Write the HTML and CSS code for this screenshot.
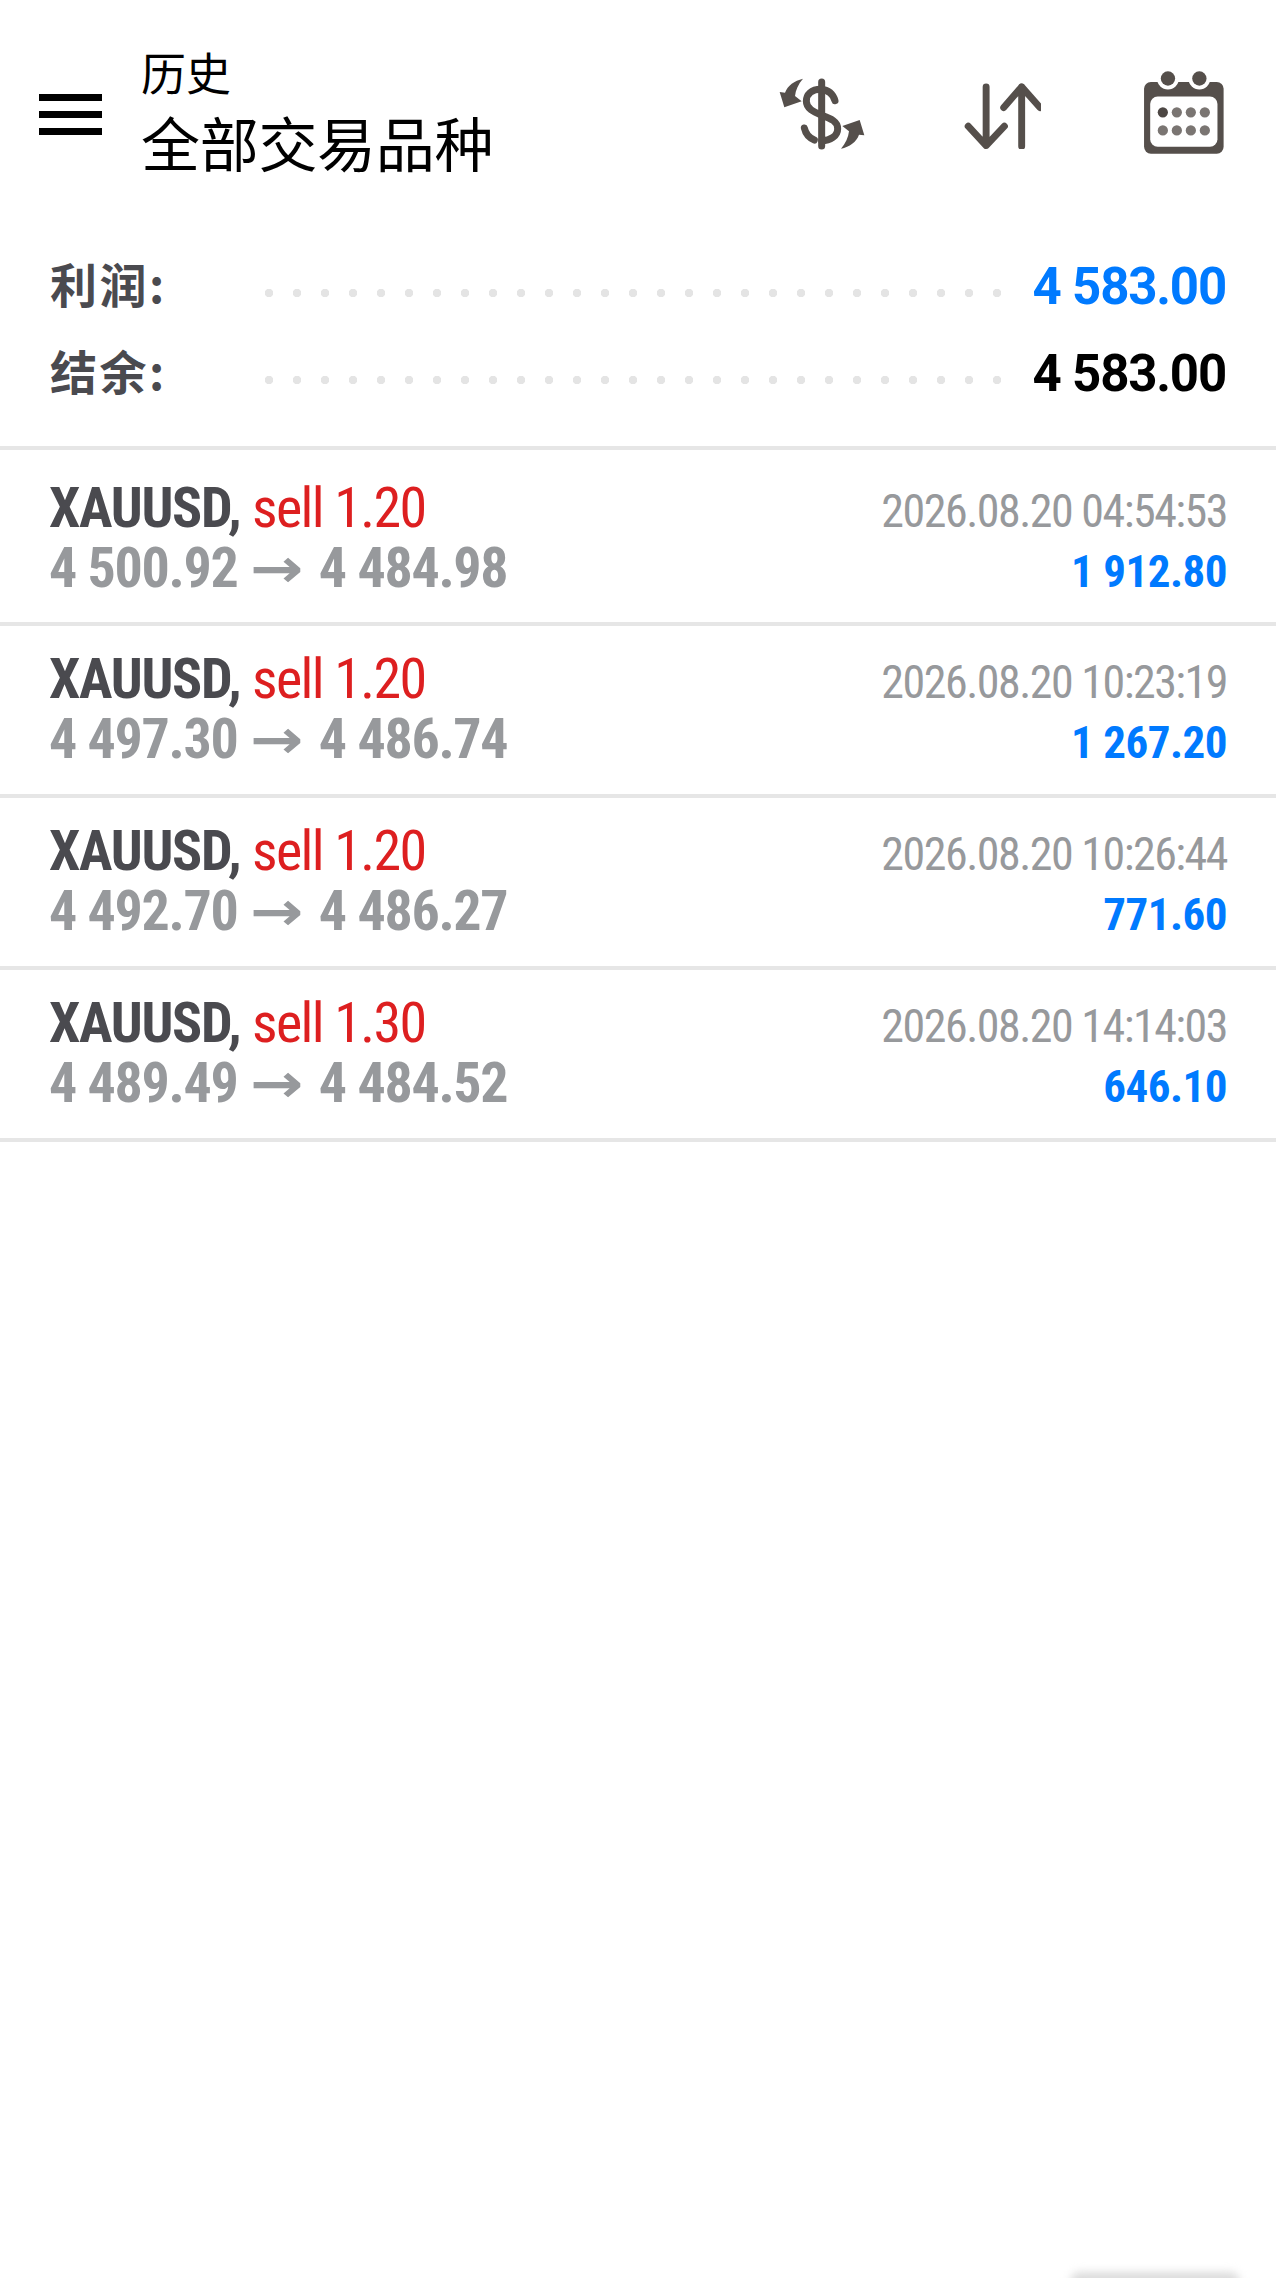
FILE: index.html
```html
<!DOCTYPE html>
<html lang="zh">
<head>
<meta charset="utf-8"/>
<title>历史</title>
<link rel="stylesheet" href="styles.css">
</head>
<body>
<div class="page">
  <header class="topbar">
    <div class="menu-btn"><span></span><span></span><span></span></div>
    <div class="titles">
      <div class="title-small">历史</div>
      <div class="title-big">全部交易品种</div>
    </div>
    <div class="actions">
      <svg class="icon-dollar" viewBox="0 0 300 252">
        <g fill="none" stroke="#554f4b" stroke-width="21" stroke-linecap="round">
          <path d="M152 30V222"/>
          <path d="M192 86C186 66 170 54 150 52C120 52 106 68 106 88C106 110 128 120 152 130C180 140 200 148 200 170C200 192 178 206 152 206"/>
          <path d="M100 168C104 186 116 198 130 204"/>
        </g>
        <g fill="#554f4b">
          <path d="M96 20C70 26 50 40 42 62L26 60L40 106L92 88L72 72C74 54 82 36 96 20Z"/>
          <path d="M96 20C70 26 50 40 42 62L26 60L40 106L92 88L72 72C74 54 82 36 96 20Z" transform="rotate(180 153 125)"/>
        </g>
      </svg>
      <svg class="icon-arrows" viewBox="0 0 226 194" fill="none" stroke="#554f4b" stroke-width="20" stroke-linecap="round" stroke-linejoin="round">
        <path d="M67 14V184M15 128L67 184L120 128"/>
        <path d="M170 186V14M118 74L170 14L223 74"/>
      </svg>
      <svg class="icon-calendar" viewBox="0 0 240 246">
        <rect x="3" y="32" width="233" height="210" rx="20" fill="#554f4b"/>
        <circle cx="73" cy="22" r="32" fill="#fff"/>
        <circle cx="165" cy="22" r="32" fill="#fff"/>
        <circle cx="73" cy="22" r="21" fill="#554f4b"/>
        <circle cx="165" cy="22" r="21" fill="#554f4b"/>
        <rect x="21" y="75" width="197" height="147" rx="22" fill="#fff"/>
        <g fill="#7a7572">
          <circle cx="58" cy="121" r="15" fill="#4d4744"/>
          <circle cx="99" cy="121" r="15"/>
          <circle cx="140" cy="121" r="15"/>
          <circle cx="181" cy="121" r="15"/>
          <circle cx="58" cy="174" r="15"/>
          <circle cx="99" cy="174" r="15"/>
          <circle cx="140" cy="174" r="15"/>
          <circle cx="181" cy="174" r="15"/>
        </g>
      </svg>
    </div>
  </header>

  <section class="summary">
    <div class="sum-row">
      <span class="sum-label">利润:</span>
      <span class="sum-dots"></span>
      <span class="sum-value blue">4 583.00</span>
    </div>
    <div class="sum-row">
      <span class="sum-label">结余:</span>
      <span class="sum-dots"></span>
      <span class="sum-value">4 583.00</span>
    </div>
  </section>

  <section class="deals">
    <div class="deal">
      <div class="deal-left">
        <div class="deal-name">XAUUSD, <span class="red">sell 1.20</span></div>
        <div class="deal-price">4 500.92 <span class="arrow">→</span> 4 484.98</div>
      </div>
      <div class="deal-right">
        <div class="deal-time">2026.08.20 04:54:53</div>
        <div class="deal-profit">1 912.80</div>
      </div>
    </div>
    <div class="deal">
      <div class="deal-left">
        <div class="deal-name">XAUUSD, <span class="red">sell 1.20</span></div>
        <div class="deal-price">4 497.30 <span class="arrow">→</span> 4 486.74</div>
      </div>
      <div class="deal-right">
        <div class="deal-time">2026.08.20 10:23:19</div>
        <div class="deal-profit">1 267.20</div>
      </div>
    </div>
    <div class="deal">
      <div class="deal-left">
        <div class="deal-name">XAUUSD, <span class="red">sell 1.20</span></div>
        <div class="deal-price">4 492.70 <span class="arrow">→</span> 4 486.27</div>
      </div>
      <div class="deal-right">
        <div class="deal-time">2026.08.20 10:26:44</div>
        <div class="deal-profit">771.60</div>
      </div>
    </div>
    <div class="deal">
      <div class="deal-left">
        <div class="deal-name">XAUUSD, <span class="red">sell 1.30</span></div>
        <div class="deal-price">4 489.49 <span class="arrow">→</span> 4 484.52</div>
      </div>
      <div class="deal-right">
        <div class="deal-time">2026.08.20 14:14:03</div>
        <div class="deal-profit">646.10</div>
      </div>
    </div>
  </section>

  <div class="gesture"></div>
</div>
</body>
</html>
```

FILE: styles.css
```css
html, body {
  margin: 0;
  padding: 0;
  background: #fff;
}

body {
  font-family: "Roboto", "Noto Sans CJK SC", sans-serif;
}

.page {
  position: relative;
  width: 1276px;
  height: 2278px;
  overflow: hidden;
}

/* top bar */
.topbar {
  display: flex;
  align-items: flex-start;
  height: 220px;
  box-sizing: border-box;
  padding: 43px 51px 0 39px;
}

.menu-btn {
  display: flex;
  flex-direction: column;
  gap: 10px;
  width: 63px;
  margin-top: 51px;
}

.menu-btn span {
  display: block;
  height: 7px;
  background: #000;
}

.titles {
  margin-left: 39px;
  font-family: "Noto Sans CJK SC", sans-serif;
  color: #000;
}

.title-small {
  font-size: 45px;
  line-height: 58px;
}

.title-big {
  font-size: 59px;
  line-height: 70px;
  margin-top: 6px;
  letter-spacing: -0.3px;
}

.actions {
  display: flex;
  align-items: flex-start;
  margin-left: auto;
  margin-top: 26px;
}

.icon-dollar {
  width: 100px;
  height: 84px;
  margin-top: 3px;
}

.icon-arrows {
  width: 78px;
  height: 67px;
  margin-top: 13px;
  margin-left: 92px;
}

.icon-calendar {
  width: 82px;
  height: 84px;
  margin-top: 2px;
  margin-left: 102px;
}

/* profit / balance */
.summary {
  display: flex;
  flex-direction: column;
  gap: 27px;
  height: 230px;
  box-sizing: border-box;
  padding: 36px 50px 0 50px;
  border-bottom: 4px solid #e6e6e6;
}

.sum-row {
  display: flex;
  align-items: center;
  height: 60px;
}

.sum-label {
  width: 215px;
  margin-bottom: 8px;
  font-family: "Noto Sans CJK SC", sans-serif;
  font-size: 47px;
  font-weight: 700;
  letter-spacing: 2.5px;
  color: #4a4a4f;
}

.sum-dots {
  width: 736px;
  height: 8px;
  margin-top: 14px;
  background-image: radial-gradient(circle at 4px 4px, #e4e4e4 4px, transparent 4.5px);
  background-size: 28px 8px;
  background-repeat: repeat-x;
}

.sum-value {
  margin-left: auto;
  font-size: 51px;
  font-weight: 700;
  font-stretch: 92%;
  letter-spacing: -1.2px;
  color: #000;
}

.sum-value.blue {
  color: #007aff;
}

/* deals */
.deal {
  display: flex;
  justify-content: space-between;
  height: 172px;
  box-sizing: border-box;
  padding: 23px 49px 0 49px;
  border-bottom: 4px solid #e6e6e6;
}

.deal:first-child {
  height: 176px;
  padding-top: 28px;
}

.deal-name,
.deal-price {
  font-size: 56px;
  line-height: 60px;
  font-stretch: 75%;
  letter-spacing: -1.3px;
  color: #4a4a4f;
}

.deal-name {
  font-weight: 700;
}

.deal-name .red {
  font-weight: 400;
  letter-spacing: -1.6px;
  color: #dd1f20;
}

.deal-price {
  font-weight: 700;
  color: #97999c;
}

.arrow {
  display: inline-block;
  width: 54px;
  margin: 0 3px 0 1px;
  font-family: "DejaVu Sans", sans-serif;
  font-size: 54px;
  line-height: 40px;
  font-stretch: normal;
  letter-spacing: 0;
  transform: scaleX(1.18);
  transform-origin: left center;
}

.deal-right {
  text-align: right;
}

.deal-time {
  margin-top: 3px;
  font-size: 46px;
  line-height: 60px;
  font-stretch: 75%;
  letter-spacing: -1.5px;
  color: #97999c;
}

.deal-profit {
  margin-top: 1px;
  font-size: 45px;
  line-height: 60px;
  font-stretch: 75%;
  font-weight: 700;
  letter-spacing: -0.5px;
  color: #007aff;
}

/* home gesture shadow at the very bottom */
.gesture {
  position: absolute;
  left: 1070px;
  bottom: -14px;
  width: 170px;
  height: 20px;
  border-radius: 10px;
  background: #dcdcdc;
  filter: blur(4px);
}
```
